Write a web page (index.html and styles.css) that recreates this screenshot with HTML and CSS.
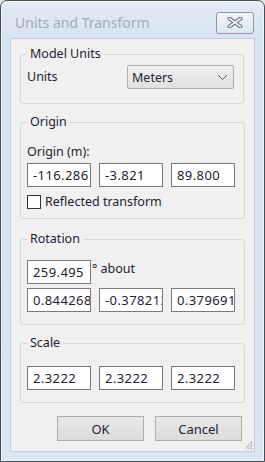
FILE: index.html
```html
<!DOCTYPE html>
<html lang="en">
<head>
  <meta charset="UTF-8">
  <meta name="viewport" content="width=device-width, initial-scale=1.0">
  <title>Units and Transform</title>
  <link rel="stylesheet" href="styles.css">
</head>
<body>
  <div class="window">
    <div class="titlebar">
      <span class="title">Units and Transform</span>
      <button class="close" type="button">
        <svg width="16" height="11" viewBox="0 0 16 11">
          <path d="M2.5 1.5 L13.5 9.5 M13.5 1.5 L2.5 9.5" stroke="#5f6b7a" stroke-width="4" stroke-linecap="round"/>
          <path d="M2.5 1.5 L13.5 9.5 M13.5 1.5 L2.5 9.5" stroke="#eef2f7" stroke-width="2" stroke-linecap="round"/>
        </svg>
      </button>
    </div>

    <div class="client">
      <fieldset class="group group-units">
        <legend>Model Units</legend>
        <div class="units-row">
          <span class="label">Units</span>
          <div class="select">
            <span>Meters</span>
            <svg width="11" height="7" viewBox="0 0 11 7">
              <path d="M1 1 L5.5 5.5 L10 1" fill="none" stroke="#5a5a5a" stroke-width="1"/>
            </svg>
          </div>
        </div>
      </fieldset>

      <fieldset class="group group-origin">
        <legend>Origin</legend>
        <div class="label origin-label">Origin (m):</div>
        <div class="fields">
          <input type="text" value="-116.286">
          <input type="text" value="-3.821">
          <input type="text" value="89.800">
        </div>
        <label class="check-row">
          <span class="checkbox"></span>
          Reflected transform
        </label>
      </fieldset>

      <fieldset class="group group-rotation">
        <legend>Rotation</legend>
        <div class="angle-row">
          <input type="text" value="259.495">
          <span class="about">° about</span>
        </div>
        <div class="fields axis">
          <input type="text" value="0.8442683">
          <input type="text" value="-0.3782136">
          <input type="text" value="0.3796912">
        </div>
      </fieldset>

      <fieldset class="group group-scale">
        <legend>Scale</legend>
        <div class="fields">
          <input type="text" value="2.3222">
          <input type="text" value="2.3222">
          <input type="text" value="2.3222">
        </div>
      </fieldset>

      <div class="buttons">
        <button type="button" class="btn">OK</button>
        <button type="button" class="btn">Cancel</button>
      </div>

      <svg class="grip" width="10" height="10" viewBox="0 0 10 10">
        <path d="M9 2 L2 9 M9 5 L5 9 M9 8 L8 9" stroke="#8c8c8c" stroke-width="1.2" stroke-dasharray="1 1"/>
      </svg>
    </div>
  </div>
</body>
</html>
```

FILE: styles.css
```css
body {
  margin: 0;
  background: #e6e6e6;
  font-family: "Noto Sans", "Open Sans", sans-serif;
  font-size: 12.5px;
  color: #1f2230;
}
.window {
  width: 265px;
  height: 462px;
  box-sizing: border-box;
  border: 1px solid #4a4d52;
  border-radius: 7px 7px 0 0;
  background: linear-gradient(#e2ebf6, #d6e3f1 38px, #d9e5f3);
  box-shadow: inset 0 0 0 1px rgba(255, 255, 255, 0.55);
  padding: 0 9px 9px;
  display: flex;
  flex-direction: column;
}
.titlebar {
  height: 37px;
  box-sizing: border-box;
  padding: 6px 1px 0 5px;
  display: flex;
  align-items: center;
  justify-content: space-between;
}
.title {
  font-size: 14px;
  color: #a3abb5;
}
.close {
  width: 38px;
  height: 22px;
  padding: 0;
  border: 1px solid #8795a8;
  border-radius: 3px;
  background: linear-gradient(#f2f5f9, #dfe6ef);
  display: flex;
  align-items: center;
  justify-content: center;
}
.client {
  flex: 1;
  position: relative;
  background: #f0f0f0;
  border: 1px solid #c3ceda;
  padding: 7px 10px 0 9px;
}
.group {
  margin: 0;
  border: 1px solid #d7d7d7;
  border-radius: 3px;
  padding: 0 9px 12px 6px;
}
.group legend {
  padding: 0 3px;
  line-height: 16px;
}
.label {
  line-height: 16px;
}
.group-units {
  padding-bottom: 14px;
}
.group-origin {
  margin-top: 10px;
  padding-bottom: 8px;
}
.group-rotation {
  margin-top: 12px;
}
.group-scale {
  margin-top: 10px;
}
.units-row {
  margin-top: 3px;
  display: flex;
  align-items: center;
  justify-content: space-between;
}
.select {
  width: 107px;
  height: 24px;
  box-sizing: border-box;
  border: 1px solid #acacac;
  border-radius: 2px;
  background: linear-gradient(#f0f0f0, #e0e0e0);
  padding: 0 5px 0 4px;
  display: flex;
  align-items: center;
  justify-content: space-between;
}
.origin-label {
  margin-top: 14px;
}
.fields {
  display: flex;
  gap: 8px;
  margin-top: 3px;
}
.group-scale .fields {
  margin-top: 15px;
}
.axis {
  margin-top: 4px;
}
input[type="text"] {
  width: 64px;
  height: 24px;
  box-sizing: border-box;
  border: 1px solid #7a7a7a;
  background: #fff;
  padding: 0 0 0 5px;
  font-family: inherit;
  font-size: 13px;
  letter-spacing: 0.4px;
  color: #1f2230;
}
.check-row {
  margin-top: 7px;
  height: 16px;
  display: flex;
  align-items: center;
  gap: 4px;
  line-height: 16px;
}
.checkbox {
  width: 14px;
  height: 14px;
  box-sizing: border-box;
  border: 1px solid #333;
  background: #fff;
}
.angle-row {
  margin-top: 13px;
  display: flex;
  align-items: flex-start;
}
.about {
  margin-left: 1px;
  line-height: 16px;
  margin-top: 1px;
}
.buttons {
  margin-top: 13px;
  margin-right: 2px;
  display: flex;
  justify-content: flex-end;
  gap: 11px;
}
.btn {
  width: 87px;
  height: 25px;
  border: 1px solid #adadad;
  background: linear-gradient(#e8e8e8, #dcdcdc);
  font-family: inherit;
  font-size: 13px;
  color: #1f2230;
  padding: 0;
}
.grip {
  position: absolute;
  right: 1px;
  bottom: 1px;
}
```
